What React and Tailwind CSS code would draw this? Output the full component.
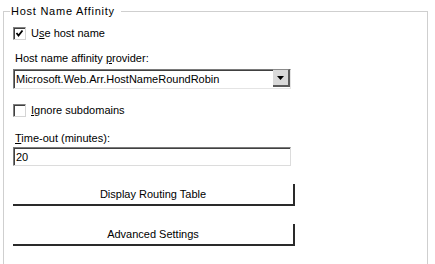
import React from "react";

const font = { fontFamily: '"Liberation Sans", Arial, sans-serif' };

function CheckBox({ checked }) {
  return (
    <div className="w-[13px] h-[13px] bg-white border border-t-[#808080] border-l-[#808080] border-b-[#d4d4d4] border-r-[#d4d4d4] shadow-[inset_1px_1px_0_#404040] flex items-center justify-center">
      {checked && (
        <svg width="11" height="11" viewBox="0 0 11 11">
          <polyline points="2.5,5 4.5,7.5 8.5,2.5" fill="none" stroke="#000" strokeWidth="1.8" />
        </svg>
      )}
    </div>
  );
}

function U({ children }) {
  return <span className="underline underline-offset-[1px]">{children}</span>;
}

function Btn({ children, mt }) {
  return (
    <div className={`${mt} w-[282px] h-[22px] bg-white border-r-2 border-b-2 border-[#2a2a2a] flex items-center justify-center text-[11px] leading-[13px] text-black`}>
      {children}
    </div>
  );
}

export default function App() {
  return (
    <div className="w-[435px] h-[264px] bg-white overflow-hidden pl-[3px] pt-[5px] text-black" style={font}>
      <fieldset className="w-[425px] h-[300px] border border-[#cfcfcf] pl-[6px] pt-0">
        <legend className="pl-[1px] pr-[6px] text-[11px] leading-[13px] tracking-[0.75px]">Host Name Affinity</legend>
        <div className="pl-[3px] flex flex-col text-[11px] leading-[13px]">
          <div className="mt-[9px] h-[13px] flex items-center">
            <CheckBox checked />
            <span className="ml-[5px]">U<U>s</U>e host name</span>
          </div>
          <div className="mt-[12px] h-[13px] pl-[2px]">
            Host name affinity <U>p</U>rovider:
          </div>
          <div className="mt-[4px] w-[278px] h-[20px] flex border-t border-l border-[#7a7a7a] border-b border-r border-b-[#e4e4e4] border-r-[#e4e4e4] shadow-[inset_1px_1px_0_#404040]">
            <div className="flex-1 flex items-center pl-[2px] pt-[1px]">Microsoft.Web.Arr.HostNameRoundRobin</div>
            <div className="w-[17px] h-[18px] mt-[-1px] bg-[#d9d9d9] border-t border-[#8a8a8a] border-r-2 border-b-2 border-r-[#5a5a5a] border-b-[#5a5a5a] flex items-center justify-center">
              <svg width="7" height="4" viewBox="0 0 7 4">
                <polygon points="0,0 7,0 3.5,4" fill="#000" />
              </svg>
            </div>
          </div>
          <div className="mt-[15px] h-[13px] flex items-center">
            <CheckBox />
            <span className="ml-[5px]"><U>I</U>gnore subdomains</span>
          </div>
          <div className="mt-[15px] h-[13px] pl-[2px]">
            <U>T</U>ime-out (minutes):
          </div>
          <div className="mt-[2px] w-[278px] h-[19px] flex items-center pl-[2px] pt-[1px] border border-t-[#7a7a7a] border-l-[#7a7a7a] border-b-[#dcdcdc] border-r-[#dcdcdc] shadow-[inset_1px_1px_0_#404040]">
            20
          </div>
          <Btn mt="mt-[18px]">Display Routing Table</Btn>
          <Btn mt="mt-[18px]">Advanced Settings</Btn>
        </div>
      </fieldset>
    </div>
  );
}
